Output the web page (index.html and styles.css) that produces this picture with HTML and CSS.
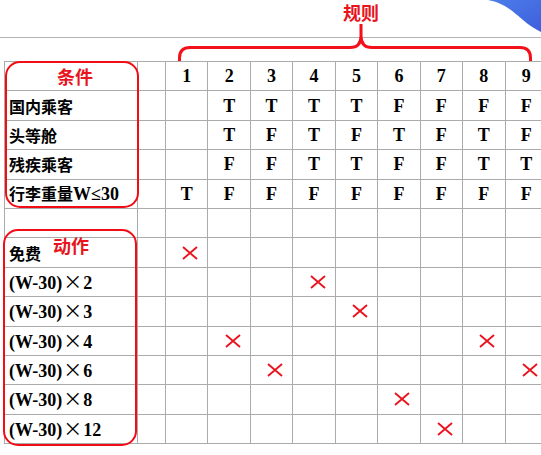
FILE: index.html
```html
<!DOCTYPE html>
<html lang="zh">
<head>
<meta charset="utf-8">
<link rel="stylesheet" href="styles.css">
</head>
<body>
<div class="page">
  <div class="top">
    <svg class="deco" width="541" height="61" viewBox="0 0 541 61">
      <defs>
        <linearGradient id="bl" x1="0" y1="0" x2="1" y2="1">
          <stop offset="0" stop-color="#4d7eea"/>
          <stop offset="1" stop-color="#3d5fdc"/>
        </linearGradient>
      </defs>
      <path d="M488 0 C512 4 520 22 541 32 V0 Z" fill="url(#bl)"/>
      <line x1="0" y1="37.5" x2="541" y2="37.5" stroke="#b4b4b4" stroke-width="1"/>
      <path d="M179.5 62 V58 Q179.5 47.5 190 47.5 H350 Q361 47.5 361 36 V24 V36 Q361 47.5 372 47.5 H520 Q530.5 47.5 530.5 58 V62" fill="none" stroke="#f2111a" stroke-width="3"/>
    </svg>
    <span class="rule-label">规则</span>
  </div>
  <div class="grid-wrap">
    <table class="grid">
      <colgroup>
        <col class="c-label"><col class="c-gap">
        <col class="c-rule"><col class="c-rule"><col class="c-rule"><col class="c-rule"><col class="c-rule"><col class="c-rule"><col class="c-rule"><col class="c-rule"><col class="c-rule">
      </colgroup>
      <tr class="head">
        <td class="lbl cond-title">条件</td><td></td>
        <td>1</td><td>2</td><td>3</td><td>4</td><td>5</td><td>6</td><td>7</td><td>8</td><td>9</td>
      </tr>
      <tr><td class="lbl">国内乘客</td><td></td><td></td><td>T</td><td>T</td><td>T</td><td>T</td><td>F</td><td>F</td><td>F</td><td>F</td></tr>
      <tr><td class="lbl">头等舱</td><td></td><td></td><td>T</td><td>F</td><td>T</td><td>F</td><td>T</td><td>F</td><td>T</td><td>F</td></tr>
      <tr><td class="lbl">残疾乘客</td><td></td><td></td><td>F</td><td>F</td><td>T</td><td>T</td><td>F</td><td>F</td><td>T</td><td>T</td></tr>
      <tr><td class="lbl">行李重量<span class="lat">W≤30</span></td><td></td><td>T</td><td>F</td><td>F</td><td>F</td><td>F</td><td>F</td><td>F</td><td>F</td><td>F</td></tr>
      <tr><td></td><td></td><td></td><td></td><td></td><td></td><td></td><td></td><td></td><td></td><td></td></tr>
      <tr><td class="lbl">免费</td><td></td><td class="x"><svg class="xm" viewBox="0 0 16 14"><path d="M1 1 L15 13 M15 1 L1 13"/></svg></td><td></td><td></td><td></td><td></td><td></td><td></td><td></td><td></td></tr>
      <tr><td class="lbl lat">(W-30)<span class="mul">×</span>2</td><td></td><td></td><td></td><td></td><td class="x"><svg class="xm" viewBox="0 0 16 14"><path d="M1 1 L15 13 M15 1 L1 13"/></svg></td><td></td><td></td><td></td><td></td><td></td></tr>
      <tr><td class="lbl lat">(W-30)<span class="mul">×</span>3</td><td></td><td></td><td></td><td></td><td></td><td class="x"><svg class="xm" viewBox="0 0 16 14"><path d="M1 1 L15 13 M15 1 L1 13"/></svg></td><td></td><td></td><td></td><td></td></tr>
      <tr><td class="lbl lat">(W-30)<span class="mul">×</span>4</td><td></td><td></td><td class="x"><svg class="xm" viewBox="0 0 16 14"><path d="M1 1 L15 13 M15 1 L1 13"/></svg></td><td></td><td></td><td></td><td></td><td></td><td class="x"><svg class="xm" viewBox="0 0 16 14"><path d="M1 1 L15 13 M15 1 L1 13"/></svg></td><td></td></tr>
      <tr><td class="lbl lat">(W-30)<span class="mul">×</span>6</td><td></td><td></td><td></td><td class="x"><svg class="xm" viewBox="0 0 16 14"><path d="M1 1 L15 13 M15 1 L1 13"/></svg></td><td></td><td></td><td></td><td></td><td></td><td class="x"><svg class="xm" viewBox="0 0 16 14"><path d="M1 1 L15 13 M15 1 L1 13"/></svg></td></tr>
      <tr><td class="lbl lat">(W-30)<span class="mul">×</span>8</td><td></td><td></td><td></td><td></td><td></td><td></td><td class="x"><svg class="xm" viewBox="0 0 16 14"><path d="M1 1 L15 13 M15 1 L1 13"/></svg></td><td></td><td></td><td></td></tr>
      <tr><td class="lbl lat">(W-30)<span class="mul">×</span>12</td><td></td><td></td><td></td><td></td><td></td><td></td><td></td><td class="x"><svg class="xm" viewBox="0 0 16 14"><path d="M1 1 L15 13 M15 1 L1 13"/></svg></td><td></td><td></td></tr>
    </table>
    <div class="box box-cond"></div>
    <div class="box box-act"><span class="act-label">动作</span></div>
  </div>
</div>
</body>
</html>
```

FILE: styles.css
```css
html, body {
  margin: 0;
  padding: 0;
  background: #ffffff;
}
.page {
  width: 541px;
  height: 455px;
  overflow: hidden;
  position: relative;
}
.top {
  height: 61px;
  position: relative;
}
.deco {
  position: absolute;
  left: 0;
  top: 0;
}
.rule-label {
  position: relative;
  display: inline-block;
  margin-left: 343px;
  margin-top: 0;
  font-family: "Noto Sans CJK SC", sans-serif;
  font-weight: 700;
  font-size: 18px;
  line-height: 24px;
  color: #e8141e;
}
.grid-wrap {
  position: relative;
  margin-left: 4px;
  width: 543px;
}
.grid {
  border-collapse: collapse;
  table-layout: fixed;
  width: 543px;
}
.c-label { width: 133px; }
.c-gap { width: 28px; }
.c-rule { width: 42.44px; }
.grid tr {
  height: 29.4px;
}
.grid td {
  border: 1px solid #ababab;
  padding: 0;
  text-align: center;
  vertical-align: middle;
  font-family: "Liberation Serif", serif;
  font-weight: 700;
  font-size: 18px;
  line-height: 20px;
  color: #000;
}
.grid td.lbl {
  text-align: left;
  padding-left: 4px;
  font-family: "Noto Sans CJK SC", sans-serif;
  font-size: 16px;
  white-space: nowrap;
}
.grid td.lbl.lat,
.grid .lat {
  font-family: "Liberation Serif", "Noto Sans CJK SC", serif;
  font-size: 18px;
}
.grid td.cond-title {
  text-align: center;
  padding-left: 8px;
  color: #e8141e;
  font-size: 18px;
}
.mul {
  font-family: "Noto Sans CJK SC", sans-serif;
  font-weight: 400;
  font-size: 19px;
  padding: 0 1px;
}
.grid td.x {
  padding-left: 7px;
}
.xm {
  display: block;
  width: 16px;
  height: 14px;
  margin: 0 auto;
  fill: none;
  stroke: #e8141e;
  stroke-width: 1.9;
}
.box {
  position: absolute;
  border: 2px solid #f20d16;
  border-radius: 15px;
}
.box-cond {
  left: 1px;
  top: 0px;
  width: 130px;
  height: 143px;
}
.box-act {
  left: -1px;
  top: 168px;
  width: 130px;
  height: 213px;
}
.act-label {
  position: absolute;
  left: 48px;
  top: 4px;
  font-family: "Noto Sans CJK SC", sans-serif;
  font-weight: 700;
  font-size: 18px;
  line-height: 20px;
  color: #e8141e;
}
```
